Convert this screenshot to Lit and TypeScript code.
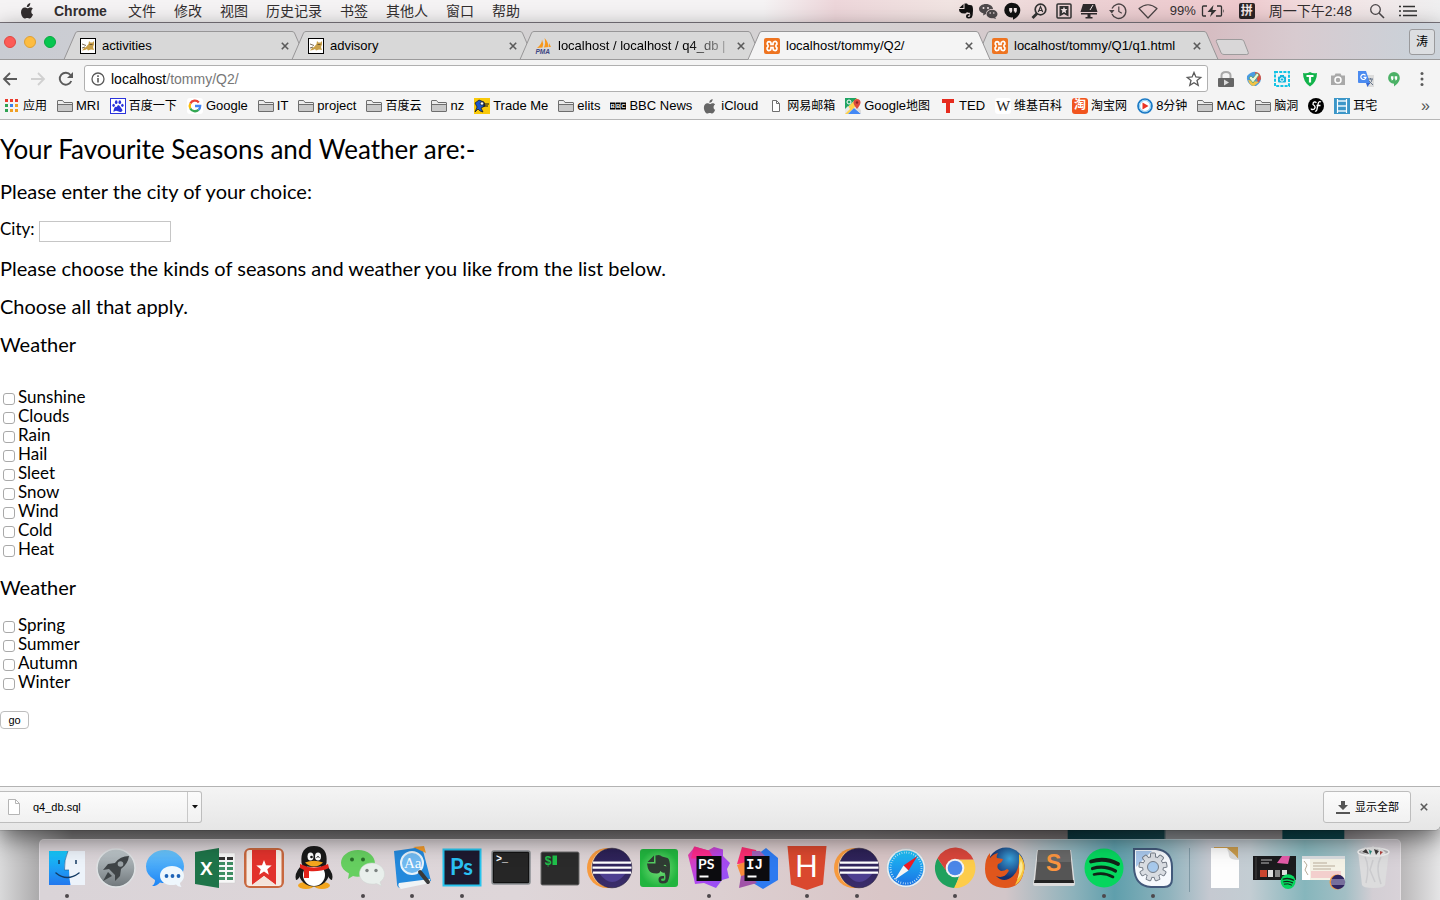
import { LitElement, html, svg, css, nothing, type SVGTemplateResult } from "lit";
import { customElement } from "lit/decorators.js";
import { classMap } from "lit/directives/class-map.js";

const icon = (w: number, h: number, body: SVGTemplateResult, box = `0 0 ${w} ${h}`) =>
  html`<svg width=${w} height=${h} viewBox=${box} fill="none" aria-hidden="true">${body}</svg>`;
const i16 = (body: SVGTemplateResult) => icon(16, 16, body);

/* ---------- shared glyphs ---------- */
const applePath = svg`<path d="M11.3 0c.1 1.100-.3 2.100-.9 2.900-.7.8-1.700 1.300-2.600 1.200-.1-1 .4-2.100.9-2.700C9.400.6 10.500.1 11.300 0zM14 11.600c-.4 1-1.600 3.900-3.200 3.900-1 0-1.400-.6-2.600-.6-1.200 0-1.600.6-2.500.6C3.900 15.600 2 12 2 9.300c0-2.900 1.800-4.700 3.700-4.700 1.100 0 2 .7 2.700.7.600 0 1.700-.8 3-.8 1 0 1.900.5 2.500 1.300-2.300 1.400-1.900 4.800.1 5.800z" fill="currentColor"/>`;
const closeX = icon(8, 8, svg`<path d="M.8.8l6.400 6.400M7.200.8L.8 7.200" stroke="#5a5a5a" stroke-width="1.600"/>`);
const folder = i16(svg`<path d="M.5 13V3q0-.5.5-.5h4.500L7 4.500h8q.5 0 .5.5v8q0 .5-.5.500H1Q.5 13.500.5 13z" fill="#c9c9c9" stroke="#6e6e6e"/><path d="M1 6.500h14" stroke="#6e6e6e"/><path d="M1 3h4.300L6.800 5H15v1H1z" fill="#ececec"/>`);
const tomcat = i16(svg`<rect x=".5" y=".5" width="15" height="15" fill="#fff" stroke="#000"/><path d="M2 12.500l2-2.500 2-1 2.500-3L9 3l1.500 1.500h2L14 3v3.500L13 9l1 3-3-.5-3 1-1-1.500-2 1z" fill="#c9a04a"/><path d="M2 6l4 1.500M2 10l3-1M9.500 6.500h3" stroke="#59452a" stroke-width=".8"/>`);
const xampp = i16(svg`<rect width="16" height="16" rx="2" fill="#ee7420"/><path d="M5 3.600a2 2 0 0 0-1 3.600v1.600a2 2 0 1 0 3 1.700V9.500h2v1a2 2 0 1 0 3-1.700V7.200a2 2 0 1 0-3-1.700v1H7v-1a2 2 0 0 0-2-1.900z" stroke="#fff" stroke-width="1.700"/>`);
const pma = i16(svg`<path d="M1 10Q6 6 6 1.500q2 4 .5 8zM8 9.500Q10 5 8.500 0q4 4 4 9zM13 9V5l2 4z" fill="#f7981d"/><text x="-.5" y="15.500" font-family="Liberation Sans" font-size="6.500" font-weight="700" font-style="italic" fill="#3c4482">PMA</text>`);

/* ---------- menu bar status ---------- */
const statusIcons = [
  icon(16, 18, svg`<path d="M5.500 2v4H1.300zM1 7h5.500V1.500h2.500l1 1.200 3.500.5q1.500.3 1.500 5.300 0 5-1.200 7-1 1-3.300 1-2.500 0-2.500-2.500 0-2 2.500-2h1v1.500q-1.800-.2-1.800.7 0 .8 1.300.8 1.300 0 1.300-2-.2-2-1-2.500-1.500.5-2.300-.5-.7 1.500-2.500 1.500-3.500 0-4.500-1.500Q1.300 10.500 1 7z" fill="#111"/>`),
  icon(20, 18, svg`<path d="M8 2c4 0 7 2.500 7 5h-1c-3.500 0-6 2.300-6 5l-3 1.500.5-2C3 10.500 1 9 1 7c0-2.700 3-5 7-5z" fill="#4e494b"/><ellipse cx="14" cy="12" rx="5.500" ry="4.300" fill="#4e494b"/><path d="M17 15l1 2-3-1z" fill="#4e494b"/><g fill="#f3e6e7"><circle cx="5.500" cy="6" r="1"/><circle cx="10" cy="6" r="1"/><circle cx="12.200" cy="11" r=".8"/><circle cx="15.800" cy="11" r=".8"/></g>`),
  icon(16, 18, svg`<path d="M8 1a7.300 7.300 0 0 1 7.300 7.300c0 5-4.500 8-7.300 9.500v-2.500A7.300 7.300 0 1 1 8 1z" fill="#111"/><path d="M4.200 6h3v3q-.3 2-2 2V9.500h-1zM8.800 6h3v3q-.3 2-2 2V9.500h-1z" fill="#f3e6e7"/>`),
  icon(16, 18, svg`<circle cx="9.500" cy="7.500" r="5.300" stroke="#333" stroke-width="1.700"/><path d="M6 11.500L1.500 16" stroke="#333" stroke-width="2.800"/><path d="M7.300 10l2.200-5.500L11.700 10M8 8.500h3" stroke="#333" stroke-width="1.200"/>`),
  icon(16, 18, svg`<rect x="1" y="2" width="14" height="14" rx="1" stroke="#333" stroke-width="1.500"/><path d="M3.500 4h9v10.500L8 12l-4.500 2.500z" fill="#333"/><path d="M8 4.700l1 2.300 2.500.2-1.900 1.600.6 2.500L8 9.900l-2.200 1.400.6-2.500-1.900-1.600L7 7z" fill="#f3e6e7"/>`),
  icon(20, 18, svg`<path d="M4 2h12l2.500 8h-17z" fill="#2e2a2c"/><path d="M2 11h16v1.500H2z" fill="#2e2a2c"/><path d="M8.500 12h3v3h2v1.500h-7V15h2z" fill="#2e2a2c"/><path d="M11 8l3-5" stroke="#f3e6e7"/>`),
  icon(18, 18, svg`<path d="M3 6.500A7.200 7.200 0 1 1 3 12" stroke="#4a4345" stroke-width="1.300"/><path d="M0 8h5.500L2.800 11.500z" fill="#4a4345"/><path d="M9.800 4.500v5l3 1.800" stroke="#4a4345" stroke-width="1.200"/>`),
  icon(20, 18, svg`<path d="M1 6.500Q10-1 19 6.500L10 16z" stroke="#4a4345" stroke-width="1.200" stroke-linejoin="round"/>`),
];
const battery = icon(24, 16, svg`<path d="M6 3H2.500Q1.500 3 1.500 4v8q0 1 1 1H5M16 3h3.500q1 0 1 1v8q0 1-1 1H15" stroke="#333" stroke-width="1.300"/><path d="M22 6q1.500 2 0 4z" fill="#333"/><path d="M12.500 2L6.500 9h4l-1.500 5L15.500 7h-4z" fill="#333"/>`);
const pinyin = html`<span class="ime">拼</span>`;
const spotlight = i16(svg`<circle cx="6.500" cy="6.500" r="4.800" stroke="#4a4648" stroke-width="1.300"/><path d="M10 10l5 5" stroke="#4a4648" stroke-width="1.600"/>`);
const listIcon = icon(18, 14, svg`<path d="M0 2.500h2M0 7h2M0 11.500h2" stroke="#333" stroke-width="1.600"/><path d="M4 2.500h12M4 7h14M4 11.500h14" stroke="#333" stroke-width="1.600"/>`);

/* ---------- toolbar ---------- */
const arrow = (color: string, flip: boolean) =>
  icon(16, 16, flip
    ? svg`<path d="M1 8h13M8 2l6 6-6 6" stroke=${color} stroke-width="1.800"/>`
    : svg`<path d="M15 8H2M8 2L2 8l6 6" stroke=${color} stroke-width="1.800"/>`);
const reload = i16(svg`<path d="M13.300 10A6 6 0 1 1 12.500 4" stroke="#5a5a5a" stroke-width="1.900"/><path d="M15 1v6H9z" fill="#5a5a5a"/>`);
const info = icon(14, 14, svg`<circle cx="7" cy="7" r="6" stroke="#5a5a5a" stroke-width="1.300"/><path d="M7 6v4.500M7 3.300v1.600" stroke="#5a5a5a" stroke-width="1.600"/>`);
const star = i16(svg`<path d="M8 1.500l1.900 4.500 4.800.4L11 9.500l1.200 4.800L8 11.700l-4.200 2.600L5 9.500 1.300 6.400 6.100 6z" stroke="#5a5a5a" stroke-width="1.300"/>`);
const extensions: [string, unknown][] = [
  ["Lock", i16(svg`<path d="M3.500 7V4.500q0-3.500 4.500-3.500t4.500 3.500V7" stroke="#aaa" stroke-width="2"/><rect y="7" width="16" height="9" rx="1" fill="#666"/><path d="M6 8.500l5 3-5 3z" fill="#ddd"/>`)],
  ["Shield", i16(svg`<path d="M1 5q5-5 9-4l5 5q1 5-5 9L6 15Q0 11 1 5z" fill="#4a9be0"/><path d="M9 1q6 0 6 7l-3 4z" fill="#dc503f"/><path d="M2 9q2 6 6 6l5-4z" fill="#f0c348"/><path d="M3 7l4 5 6-8-2-2-4 5-2-2z" fill="#e7f6d9" stroke="#53985b" stroke-width=".7"/>`)],
  ["Capture", i16(svg`<rect x="1" y="1" width="14" height="14" stroke="#14c4e5" stroke-width="2" stroke-dasharray="3 1.200"/><rect x="4" y="5.500" width="8" height="6" rx="1" fill="#14b5dc"/><path d="M6 4h4v2H6z" fill="#14b5dc"/><circle cx="8" cy="8.500" r="1.700" stroke="#fff"/>`)],
  ["Ad shield", i16(svg`<path d="M1 2q4 1 7-1 3 2 7 1 0 9-7 13.500Q1 11 1 2z" fill="#12b34b"/><path d="M4.500 5h7M8 5v6.500" stroke="#fff" stroke-width="2.200"/>`)],
  ["Camera", i16(svg`<path d="M1 4.500h3.500l1-2h5l1 2H15V14H1z" fill="#a9a9a9"/><circle cx="8" cy="9" r="3" stroke="#fff" stroke-width="1.500"/>`)],
  ["Translate", i16(svg`<path d="M7 4h9v12H9z" fill="#dcdcdc"/><path d="M0 0h8l4 12H1q-1 0-1-1z" fill="#4b8bf0"/><path d="M7.500 4.300A2.600 2.600 0 1 0 8 6.300H5.500" stroke="#fff" stroke-width="1.200"/><path d="M10 8h5M12.500 7v1.500M11 13q3-2 3.200-5M11 10l4 4" stroke="#66758a"/><path d="M8 12h4l-2.500 4z" fill="#3367d6"/>`)],
  ["Hangouts", i16(svg`<path d="M8 1a5.800 5.800 0 0 1 5.800 6C13.800 11 10 14 8 15.500v-2.700A5.900 5.900 0 1 1 8 1z" fill="#4bb166"/><path d="M4.900 5.300h2.500v2.400q-.2 1.800-1.900 1.800V7.800h-.6zM8.700 5.300h2.500v2.400q-.2 1.800-1.900 1.800V7.800h-.6z" fill="#fff"/>`)],
  ["Menu", i16(svg`<g fill="#5a5a5a"><circle cx="8" cy="2.500" r="1.500"/><circle cx="8" cy="8" r="1.500"/><circle cx="8" cy="13.500" r="1.500"/></g>`)],
];

/* ---------- bookmarks ---------- */
const bookmarks: [unknown, string, string][] = [
  [i16(svg`<g transform="translate(1 1)"><path d="M0 0h3v3H0zM5 0h3v3H5zM10 0h3v3h-3z" fill="#e93b2d"/><path d="M0 5h3v3H0z" fill="#2fa352"/><path d="M5 5h3v3H5z" fill="#3a80ea"/><path d="M10 5h3v3h-3zM5 10h3v3H5zM10 10h3v3h-3z" fill="#f0a024"/><path d="M0 10h3v3H0z" fill="#2fa352"/></g>`), "", "应用"],
  [folder, "MRI", ""],
  [i16(svg`<rect x=".5" y=".5" width="15" height="15" fill="#fff" stroke="#2a33db"/><g fill="#2a33db"><ellipse cx="6.200" cy="4.200" rx="1.300" ry="1.900"/><ellipse cx="9.800" cy="4.200" rx="1.300" ry="1.900"/><ellipse cx="3.600" cy="7.300" rx="1.200" ry="1.600"/><ellipse cx="12.400" cy="7.300" rx="1.200" ry="1.600"/><path d="M8 7q1.300 0 2.300 1.800t1.900 2.700-.5 2-3.700-.2-3.700.2-.5-2 1.900-2.700T8 7z"/></g>`), "", "百度一下"],
  [i16(svg`<rect width="16" height="16" rx="3" fill="#fff"/><g stroke-width="2.300"><path d="M3.300 5.500A5.200 5.200 0 0 1 11.800 4.400" stroke="#ea4335"/><path d="M3.300 10.500a5.200 5.200 0 0 1 0-5" stroke="#fbbc05"/><path d="M11.500 11.800a5.200 5.200 0 0 1-8.200-1.300" stroke="#34a853"/><path d="M8 8h5.200q0 2.500-1.700 3.800" stroke="#4285f4"/></g>`), "Google", ""],
  [folder, "IT", ""],
  [folder, "project", ""],
  [folder, "", "百度云"],
  [folder, "nz", ""],
  [i16(svg`<rect width="16" height="16" fill="#f9c909"/><path d="M1 14l2-5-2-4 4-3 5 2 1 4-4 2 2 4-3-1-2-2z" fill="#1d56c9" stroke="#111" stroke-width=".7"/><path d="M9 6l6 0M9 8h5" stroke="#111" stroke-width="1.200"/><circle cx="8" cy="5.500" r="1.700" fill="#fff" stroke="#111" stroke-width=".7"/>`), "Trade Me", ""],
  [folder, "elits", ""],
  [i16(svg`<path d="M0 4.500h5v7H0zM5.500 4.500h5v7h-5zM11 4.500h5v7h-5z" fill="#000"/><g font-family="Liberation Sans" font-size="6" font-weight="700" fill="#fff"><text x=".5" y="10.200">B</text><text x="6" y="10.200">B</text><text x="11.300" y="10.200">C</text></g>`), "BBC News", ""],
  [icon(16, 16, svg`<g color="#666">${applePath}</g>`, "0 -1 17 17"), "iCloud", ""],
  [i16(svg`<path d="M4.500 2.500h4l3 3v8h-7z" fill="#fff" stroke="#6e6e6e"/><path d="M8.500 2.500v3h3" stroke="#6e6e6e"/>`), "", "网易邮箱"],
  [i16(svg`<path d="M0 0h12L0 12z" fill="#1fa463"/><path d="M0 12L12 0l1 6-10 10H0z" fill="#ffd24d"/><path d="M0 11l3-3 2 3-5 5z" fill="#e8e8e8"/><path d="M3 16l6-6 7 6z" fill="#4489f5"/><path d="M9.500 10l2.500-2 4 4v4z" fill="#ddd"/><path d="M12 1q3.500 0 3.500 3.500 0 2-3.500 6.500-3.500-4.500-3.500-6.500Q8.500 1 12 1z" fill="#dd4b3e"/><circle cx="12" cy="4.500" r="1.200" fill="#822"/><circle cx="4" cy="4" r="2" stroke="#fff"/>`), "Google", "地图"],
  [i16(svg`<path d="M2 1h12v4h-4v10H6V5H2z" fill="#e62b1e"/>`), "TED", ""],
  [i16(svg`<rect width="16" height="16" rx="3" fill="#fff"/><text x="1" y="13" font-family="Liberation Serif" font-size="15" fill="#222">W</text>`), "", "维基百科"],
  [html`<span class="taobao">淘</span>`, "", "淘宝网"],
  [i16(svg`<circle cx="8" cy="8" r="7" fill="#fff" stroke="#1b7ac5" stroke-width="1.700"/><circle cx="8" cy="8" r="5.500" stroke="#8ccaf0" stroke-width="1.200"/><path d="M5.500 4.500l6 3.500-6 3.500z" fill="#ea3323"/>`), "8", "分钟"],
  [folder, "MAC", ""],
  [folder, "", "脑洞"],
  [i16(svg`<circle cx="8" cy="8" r="8" fill="#000"/><path d="M8.300 5q-.6-1.300-2-1T5 6.500Q7.500 8 7 9.800T4 11.500q-1-.2-.5-1M13 4q-2-1.200-2.800 1.500L8.800 12q-.5 1.500-1.800 1M8.500 7.500h4" stroke="#fff" stroke-width="1.300"/>`), "", ""],
  [i16(svg`<rect width="16" height="16" fill="#3b96c8"/><path d="M3.500 1v14M12.500 1v14" stroke="#fff" stroke-width="1.200"/><path d="M4 3h8M4 8h8M4 13h8" stroke="#e9f5fb" stroke-width="1.500"/>`), "", "耳宅"],
];

/* ---------- dock ---------- */
const dock = (body: SVGTemplateResult) => icon(44, 44, body, "-2 -2 44 44");
const eclipse = (id: string) => dock(svg`
  <defs><linearGradient id=${id} x1="0" y1="0" x2="0" y2="1"><stop stop-color="#2b2054"/><stop offset="1" stop-color="#3a2d6b"/></linearGradient></defs>
  <circle cx="17" cy="20" r="20" fill="#f79a3e"/><circle cx="20.500" cy="20" r="19.500" fill="#f7d9bb"/><circle cx="22" cy="20" r="19.800" fill=${`url(#${id})`} stroke="#1e1a35" stroke-width=".6"/>
  <path d="M9 25q13 18 27 0z" fill="#4d3f91"/>
  <path d="M3 14.700h38M2.500 19.700h39M3 24.700h38" stroke="#fff" stroke-width="2.300"/>`);
const spotifyMark = svg`<circle cx="20" cy="20" r="19.500" fill="#06d65e"/><path d="M7 13.500q14-4.500 27 2.500" stroke="#102317" stroke-width="3.800" stroke-linecap="round"/><path d="M8.500 20.500q12-3.500 23 2.500" stroke="#102317" stroke-width="3.200" stroke-linecap="round"/><path d="M10 26.500q10-2.700 19 2.500" stroke="#102317" stroke-width="2.600" stroke-linecap="round"/>`;
const gearTeeth = [0, 40, 80, 120, 160, 200, 240, 280, 320];

const dockApps: { name: string; on?: boolean; art: unknown }[] = [
  { name: "Finder", on: true, art: dock(svg`
    <defs><linearGradient id="fa" x1="0" y1="0" x2="0" y2="1"><stop stop-color="#16c9fa"/><stop offset="1" stop-color="#2277ee"/></linearGradient></defs>
    <rect x="2" y="3" width="36" height="34" fill="#edf3fa"/><path d="M2 3h19q-4 9-3.500 19H22q0 8 1.500 15H2z" fill="url(#fa)"/>
    <path d="M12 12v4M29 12v4" stroke="#143b63" stroke-width="1.500"/><path d="M9 25q11 9 23 0" stroke="#143b63" stroke-width="1.500" stroke-linecap="round"/><path d="M21 3q-4 9-3.500 19H22" stroke="#1d5990" stroke-width=".6"/>`) },
  { name: "Launchpad", art: dock(svg`
    <defs><linearGradient id="la" x1="0" y1="0" x2="0" y2="1"><stop stop-color="#c3ccd0"/><stop offset="1" stop-color="#70777b"/></linearGradient></defs>
    <circle cx="20" cy="20" r="19" fill="url(#la)" stroke="#dfe2e4" stroke-width="1.500"/>
    <path d="M33 8q-9 0-14 7l-7 1-5 6 6-1 6 6 0 6 5-5 1-7q7-5 8-13z" fill="#3f4447"/><circle cx="24.500" cy="16" r="2.800" fill="#9aa2a6"/><path d="M12 24l-5 9 9-5z" fill="#3f4447"/>`) },
  { name: "Messages", art: dock(svg`
    <defs><linearGradient id="ma" x1="0" y1="0" x2="0" y2="1"><stop stop-color="#6bc6fb"/><stop offset="1" stop-color="#1b84f6"/></linearGradient></defs>
    <path d="M20 2c11 0 19 7.500 19 16.500S31 35 20 35q-3 0-5-.6Q12 38 7 38q3-2 3-6Q1 27 1 18.500C1 9.500 9 2 20 2z" fill="url(#ma)"/>
    <path d="M27 18c7 0 12 4.300 12 9.700 0 3-1.600 5.400-4 7.200q0 2.500 1.500 4-4 0-5.500-2.400-2 .6-4 .6c-7 0-12-4-12-9.400S20 18 27 18z" fill="#eef7fd"/><g fill="#1d63b8"><circle cx="21.500" cy="28" r="1.900"/><circle cx="27.500" cy="28" r="1.900"/><circle cx="33.500" cy="28" r="1.900"/></g>`) },
  { name: "Excel", art: dock(svg`
    <path d="M20 5h20v30H20z" fill="#f7f7f7" stroke="#cfcfcf" stroke-width=".5"/><g fill="#3f8e63"><path d="M24 14h6v3h-6zM32 14h6v3h-6zM24 19h6v3h-6zM32 19h6v3h-6zM24 24h6v3h-6zM32 24h6v3h-6zM24 29h6v3h-6zM32 29h6v3h-6z"/></g><path d="M24 9h6v3h-6zM32 9h6v3h-6z" fill="#333"/>
    <path d="M0 4l24-4v40L0 36z" fill="#1e7449"/><text x="5" y="27" font-family="Liberation Sans" font-size="19" font-weight="700" fill="#fff">X</text>`) },
  { name: "Wunderlist", art: dock(svg`
    <rect x="0" y="0" width="40" height="40" rx="6" fill="#c8683f"/><rect x="2.500" y="2" width="35" height="36" rx="3" fill="#f6ebe4"/><path d="M8 2h24v35l-12-9-12 9z" fill="#e2322c"/><path d="M8 37l12-9 12 9z" fill="#f4e3da"/>
    <path d="M20 12l2 5.300 5.700.3-4.400 3.600 1.500 5.500-4.800-3.100-4.800 3.100 1.500-5.500-4.400-3.600 5.700-.3z" fill="#fff"/>`) },
  { name: "QQ", art: dock(svg`
    <ellipse cx="12" cy="37.500" rx="8" ry="3.500" fill="#f3a51d"/><ellipse cx="28" cy="37.500" rx="8" ry="3.500" fill="#f3a51d"/>
    <path d="M6 19Q0 26 2 32q2 0 4-4M34 19q6 7 4 13-2 0-4-4" fill="#191919"/><ellipse cx="20" cy="25" rx="15" ry="13.500" fill="#191919"/><ellipse cx="20" cy="27" rx="11" ry="11" fill="#fff"/>
    <path d="M7.500 15Q6-2 20-2t12.500 17q0 4-12.500 4T7.500 15z" fill="#191919"/><ellipse cx="16.500" cy="8.500" rx="3" ry="4" fill="#fff"/><ellipse cx="24" cy="8.500" rx="3" ry="4" fill="#fff"/><circle cx="17.500" cy="9" r="1.300" fill="#111"/><path d="M22.500 9.500q1.500-2 3 0" stroke="#111"/>
    <path d="M6 16q14 7 28 0l1 4q-9 4-20 3v7h-5v-8l-4-2z" fill="#e2231a"/><path d="M11 14.500q9-3.500 18 0-4 4-9 4t-9-4z" fill="#f5a71e"/>`) },
  { name: "WeChat", on: true, art: dock(svg`
    <path d="M15 2c10 0 17 6 17 13.500l-2 .5q-13 1-13 12.500-4 .5-7-.5L5 31l1-5.500Q-2 21-2 15C-2 8 5 2 15 2z" fill="#66cf60"/><path d="M29 15c7 0 12.500 5 12.500 11 0 3.500-1.700 6-4.500 8l1.500 4-5-2.500q-2 .6-4.500.6c-7 0-12.500-4.500-12.500-10.500S22 15 29 15z" fill="#e9efec" stroke="#cfd6d2" stroke-width=".5"/><g fill="#286f29"><circle cx="9" cy="11.500" r="2"/><circle cx="20" cy="11.500" r="2"/></g><g fill="#7b8280"><circle cx="24" cy="22.500" r="1.700"/><circle cx="33" cy="22.500" r="1.700"/></g>`) },
  { name: "Dictionary", on: true, art: dock(svg`
    <path d="M2 3l28-4 9 34-31 7q-3-1-3-4z" fill="#2389dc"/><path d="M7 35l31-4 0 4-29 6q-4-3-2-6z" fill="#f0f3f5"/><path d="M21-1l11-1 2 7z" fill="#f29b2c"/><circle cx="20" cy="15" r="11" fill="#71baf1" stroke="#e7f3fb" stroke-width="2"/><text x="12" y="20" font-family="Liberation Serif" font-size="15" fill="#fff">Aa</text><path d="M28 24l8 10" stroke="#3a3a3a" stroke-width="4" stroke-linecap="round"/>`) },
  { name: "Photoshop", on: true, art: dock(svg`
    <rect x="1.500" y="1.500" width="37" height="36" fill="#1d1a2f" stroke="#26c4ee" stroke-width="2"/><text x="8" y="27" font-family="Lato" font-size="22" font-weight="700" fill="#2bc0f2">Ps</text>`) },
  { name: "Terminal", art: dock(svg`
    <rect x="1" y="3" width="38" height="33" rx="2" fill="#262626" stroke="#8b8f92" stroke-width="1.500"/><rect x="2.500" y="4.500" width="35" height="30" rx="1" stroke="#111"/><text x="5" y="14" font-family="Liberation Mono" font-size="10" font-weight="700" fill="#fff">&gt;_</text>`) },
  { name: "iTerm", art: dock(svg`
    <rect x="1" y="4" width="38" height="33" rx="1.500" fill="#2b2b2b" stroke="#6b6b6b"/><text x="4.500" y="16.500" font-family="Liberation Mono" font-size="12" font-weight="700" fill="#1fc04a">$</text><path d="M12.500 7.500h4.500V17h-4.500z" fill="#1fc04a"/>`) },
  { name: "Eclipse", art: eclipse("ea") },
  { name: "Evernote", art: dock(svg`
    <defs><radialGradient id="ev"><stop stop-color="#7be07c"/><stop offset="1" stop-color="#22b53f"/></radialGradient></defs>
    <rect x="1" y="1" width="38" height="38" rx="3" fill="url(#ev)"/><path d="M15 7.500V14H8.500zM8 15.500h8.500V7.500q4.500-1.500 6.500 1l5.500 1.500q2.500 1 2.500 9.500 0 10-2.500 14.500-1.500 1.500-5 1.500-4 0-4-4 0-3.500 4-3.500H25v2.500q-3-.3-3 1.200 0 1.300 2 1.300 2.500 0 2.500-3 0-4-1-5.500-2.500.7-4-1.500-1 2.800-4 2.500-6 0-7.500-3Q8.500 20 8 15.500z" fill="#2f3b33"/><path d="M24.500 17.500q2-2 3 1z" fill="#6fdb70"/>`) },
  { name: "PhpStorm", on: true, art: dock(svg`
    <defs><linearGradient id="pa" x1="0" y1="0" x2="1" y2="1"><stop stop-color="#f23a9b"/><stop offset=".5" stop-color="#b046ee"/><stop offset="1" stop-color="#8a55f8"/></linearGradient></defs>
    <path d="M-1 7L6-1.500l13 4 6-3.500 9 2.500v6.500l7 7-3 6 2 9-7 2-6 8-12-5-9 1-1-5z" fill="url(#pa)"/><path d="M5-1.500l15 4 5 8H2z" fill="#fb2a8c"/>
    <rect x="7.500" y="8" width="25" height="25" fill="#0c0c0f"/><text x="9" y="20.500" font-family="Lato" font-size="14" font-weight="700" fill="#fff">PS</text><path d="M10.500 28.500h9" stroke="#fff" stroke-width="2"/>`) },
  { name: "IntelliJ IDEA", art: dock(svg`
    <path d="M4-1l14 3 5 12L-1 16z" fill="#fb2e72"/><path d="M-1 17l8-3 4 14-8 0z" fill="#f98b3b"/><path d="M20 6l8-6 12 10v22l-15 9-15-9z" fill="#2d7af0"/><path d="M3 28l8-2 8 9-18 5z" fill="#a153a8"/><path d="M14 3h8l6 6H14z" fill="#a163b8"/><rect x="6.500" y="8" width="25" height="25" fill="#0c0c0f"/><text x="8" y="20.500" font-family="Liberation Mono" font-size="14" font-weight="700" fill="#fff">IJ</text><path d="M9.500 28.500h9" stroke="#fff" stroke-width="2"/>`) },
  { name: "HBuilder", on: true, art: dock(svg`
    <path d="M.5-2h39L36 36.500 20 42 4 36.500z" fill="#da482e"/><text x="8" y="29" font-family="Lato" font-size="30" fill="#fff">H</text>`) },
  { name: "Eclipse EE", on: true, art: eclipse("eb") },
  { name: "Safari", art: dock(svg`
    <defs><linearGradient id="sa" x1="0" y1="0" x2="0" y2="1"><stop stop-color="#1ec1f6"/><stop offset="1" stop-color="#1a72e4"/></linearGradient></defs>
    <circle cx="20" cy="20" r="19.500" fill="#eceef0" stroke="#b9bdc2" stroke-width=".5"/><circle cx="20" cy="20" r="17.500" fill="url(#sa)"/><circle cx="20" cy="20" r="15.500" stroke="#d4effb" stroke-width="2" stroke-dasharray=".7 1.730"/>
    <path d="M31.500 8L17.500 17.500l5 5z" fill="#ed1c24"/><path d="M8.500 32l9-14.500 5 5z" fill="#f4f4f4"/>`) },
  { name: "Chrome", on: true, art: dock(svg`
    <path d="M20 40A20 20 0 0 1 2.500 10.200L13 25l11 3z" fill="#1fa15d"/><path d="M19 40A20 20 0 0 0 38.500 11.500H20l8.500 9z" fill="#fdcc4a"/><path d="M2.500 10.200A20 20 0 0 1 38.500 11.500H20L12 24z" fill="#d9463b"/><circle cx="20" cy="20" r="9.300" fill="#f3f3f3"/><circle cx="20" cy="20" r="7.300" fill="#4a87e8"/>`) },
  { name: "Firefox", art: dock(svg`
    <defs><radialGradient id="ff" cx=".6" cy=".3"><stop stop-color="#3aa3dc"/><stop offset="1" stop-color="#14306f"/></radialGradient></defs>
    <circle cx="21" cy="18" r="18.500" fill="url(#ff)"/><path d="M34 6q7 8 5 17Q36 40 20 40 0 39 0 21 0 10 5 5v5q3-4 8-5-2 3-1 5l6 1q-1 4-5 5-2 5 3 7 4 0 6-2 3 1 1 3-4 7-12 4 8 8 17 0 7-6 6-22z" fill="#e0561c"/><path d="M34 6q7 8 5 17-2 10-9 14 6-12 4-20z" fill="#f8c73b"/><path d="M36 12q5 10-4 20 3-8 2-14z" fill="#fbe99a"/>`) },
  { name: "Sublime Text", art: dock(svg`
    <path d="M3 2h34l4 34q0 2-2 2H1q-2 0-2-2z" fill="#dcdcdc"/><path d="M.5 32h39l.5 3H0z" fill="#222"/><path d="M4 2h32l3 30H1z" fill="#555"/><path d="M4 2h32l1 12H3z" fill="#686868"/><text x="12" y="23" font-family="Liberation Sans" font-size="23" font-weight="700" fill="#fb9540">S</text>`) },
  { name: "Spotify", on: true, art: dock(spotifyMark) },
  { name: "System tool", on: true, art: dock(svg`
    <path d="M1 1h22q16 2 16 18v12q0 8-8 8H18Q2 38 1 20z" fill="#f6f9fd" stroke="#42597b" stroke-width="2"/><path d="M3 3h16L3 19z" fill="#a9c8ec"/>
    <g stroke="#757d88" stroke-width="1" fill="#d9dde2">${gearTeeth.map((a) => svg`<rect x="17.500" y="5" width="5" height="6" rx="1" transform=${`rotate(${a} 20 19)`}/>`)}<circle cx="20" cy="19" r="10.500"/></g><g fill="#d9dde2">${gearTeeth.map((a) => svg`<rect x="18" y="7" width="4" height="4" transform=${`rotate(${a} 20 19)`}/>`)}</g><circle cx="20" cy="19" r="5.500" fill="#a7c9ec" stroke="#757d88"/>`) },
];
const dockFiles: { name: string; art: unknown }[] = [
  { name: "Documents", art: dock(svg`<path d="M9-1h24v14H9z" fill="#c99b4c"/><path d="M6 0h16l12 12v28H6z" fill="#fdfdfd"/><path d="M20 0q4 2 4 8 1 4 10 4L30 7q-5-5-10-7z" fill="#dcdcdc"/>`) },
  { name: "Spotify window", art: dock(svg`<rect x="-2" y="8" width="43" height="24" fill="#1b1b1d"/><path d="M1 9v22" stroke="#444"/><path d="M22 15l5-7h8l-2 8z" fill="#e45ba8"/><path d="M6 12h11M6 15h8" stroke="#bbb"/><path d="M5 22h7v7H5z" fill="#c9452f"/><path d="M13 22h5v7h-5z" fill="#ddd"/><path d="M20 22h5v7h-5z" fill="#888"/><path d="M27 22h5v5h-5z" fill="#ddd"/><g transform="translate(25.500 26) scale(.38)">${spotifyMark}</g>`) },
  { name: "Eclipse window", art: dock(svg`<rect x="-2" y="8" width="43" height="24" fill="#f4f2e6"/><path d="M-2 8h43v3H-2z" fill="#d9dde0"/><path d="M-2 11H6v21h-8z" fill="#fff"/><path d="M7 23h30v7H7z" fill="#f3cfcd"/><path d="M0 13l3 4-2 5 3 5M9 15h14M9 18h22M9 21h18" stroke="#b9ac9a"/><circle cx="33" cy="34" r="7.500" fill="#f79a3e"/><circle cx="34" cy="34" r="7.200" fill="#2f2560"/><path d="M27 32h14M27 34h14M27 36h14" stroke="#cfcbe6" stroke-width=".9"/>`) },
  { name: "Trash", art: dock(svg`<path d="M5 3h31l-4 34q-1 3-11.500 3T9 37z" fill="#dcdcdd"/><path d="M12 9q5 9 1 26M28 9q-6 10 0 27M20 12l-3 10 5 12" stroke="#cbcbce" stroke-width="1.500"/><ellipse cx="20.500" cy="4" rx="15.500" ry="4" fill="#b4b4b6" stroke="#f4f4f4" stroke-width="1.500"/><path d="M8 4l4-5 4 3 4-4 4 4 4-2 5 5-5 3-8 1z" fill="#e9e9e9"/><path d="M9 4l4-3 3 5zM21 1l5 2-3 4z" fill="#3d3a3a"/><path d="M16 2l3 1-2 4z" fill="#2f8e82"/><path d="M27 3l3 1-3 3z" fill="#b2433f"/>`) },
];

const tabs = [
  { art: tomcat, title: "activities", active: false },
  { art: tomcat, title: "advisory", active: false },
  { art: pma, title: "localhost / localhost / q4_db |", active: false, fade: true },
  { art: xampp, title: "localhost/tommy/Q2/", active: true },
  { art: xampp, title: "localhost/tommy/Q1/q1.html", active: false },
];
const menus = ["文件", "修改", "视图", "历史记录", "书签", "其他人", "窗口", "帮助"];
const weather = ["Sunshine", "Clouds", "Rain", "Hail", "Sleet", "Snow", "Wind", "Cold", "Heat"];
const seasons = ["Spring", "Summer", "Autumn", "Winter"];

@customElement("app-root")
export class AppRoot extends LitElement {
  static styles = css`
    :host { display: flex; flex-direction: column; min-height: 100vh; box-sizing: border-box; color: #000;
      font: 13px/16px "Liberation Sans", "Noto Sans CJK SC", sans-serif; background: #fff; }
    * { box-sizing: border-box; }
    svg { display: block; flex: none; overflow: visible; }
    button { font: inherit; color: inherit; background: none; border: 0; padding: 0; margin: 0; }
    a { color: inherit; text-decoration: none; }

    .menubar { display: flex; align-items: center; height: 23px; padding: 0 23px 0 19px; color: #332f30; font-size: 14px; border-bottom: 1px solid #88828a; white-space: nowrap;
      background: linear-gradient(90deg, #f5f3f4 0, #f5f3f4 53%, #edd6da 58%, #f1e4e2 66%, #ecd0d3 76%, #eec9cd 86%, #f2e4e5 93%, #efeff0 100%); }
    .menus { display: flex; align-items: center; gap: 18px; flex: 1; }
    .app-name { padding: 0 3px 0 1px; font-weight: 700; }
    .status { display: flex; align-items: center; gap: 14px; }
    .status-icons { display: grid; grid-template-columns: 18px 26px 24px 28px 22px 28px 30px 30px; justify-items: center; align-items: center; }
    .power { display: flex; align-items: center; gap: 5px; margin-left: -7px; font-size: 13px; }
    .ime { width: 16px; height: 16px; border-radius: 2px; background: #2c2426; color: #f5e6e7; font-size: 12px; line-height: 16px; text-align: center; font-weight: 700; }
    .search { margin-left: 3px; }

    .window { display: flex; flex-direction: column; flex: 1; background: #fff; border-radius: 0 0 5px 0; box-shadow: 0 8px 24px rgba(0, 0, 0, .55), 0 0 1px #000; z-index: 1; overflow: hidden; }
    .strip { display: flex; align-items: flex-end; height: 37px; padding-left: 4px; border-bottom: 1px solid #9b9a9b;
      background: linear-gradient(90deg, #c9ccd3 0, #d2d0d2 20%, #d5d2d3 60%, #d6bdc2 84%, #d8cbd0 90%, #cbd1d8 98%, #cdd3da 100%); }
    .lights { display: flex; gap: 8px; align-self: center; margin-right: 8px; padding-top: 1px; }
    .light { width: 12px; height: 12px; border-radius: 50%; background: #fc5b57; border: 1px solid #e2463f; }
    .light.min { background: #fdbc40; border-color: #dfa032; }
    .light.max { background: #06c650; border-color: #07a93f; }
    .tabs { display: flex; flex: 1; min-width: 0; align-items: flex-end; }
    .tab { display: grid; flex: 0 1 242px; min-width: 0; height: 29px; margin: 0 -14px -1px 0; }
    .tab.active { z-index: 1; }
    .tab-shape, .tab-body { grid-area: 1 / 1; min-width: 0; }
    .tab-shape { width: 100%; height: 29px; }
    .tab-body { display: flex; align-items: center; gap: 6px; padding: 0 17px 0 16px; }
    .tab-title { flex: 1; min-width: 0; overflow: hidden; white-space: nowrap; }
    .fade { mask-image: linear-gradient(90deg, #000 75%, transparent 105%); }
    .new-tab { margin: 0 0 4px 11px; }
    .profile { width: 26px; height: 26px; margin: 0 5px 4px 0; border: 1px solid #9a9a9c; border-radius: 3px; font-size: 12px; background: #dcdee1; }

    .toolbar { display: flex; align-items: center; gap: 12px; padding: 5px 10px 0 2px; background: #f4f4f4; }
    .omnibox { display: flex; align-items: center; flex: 1; gap: 6px; height: 27px; margin-left: -2px; padding: 0 5px 0 6px; background: #fff; border: 1px solid #b0b0b0; border-radius: 3px; font-size: 14px; }
    .url { flex: 1; }
    .path { color: #777; }
    .extensions { display: flex; gap: 12px; margin-left: -2px; }

    .bookmarks { display: flex; align-items: center; height: 28px; padding: 0 10px 0 4px; background: #f4f4f4; border-bottom: 1px solid #b6b6b6; gap: 10px; white-space: nowrap; }
    .bookmark { display: flex; align-items: center; gap: 3px; }
    .cjk { font-size: 12px; }
    .taobao { width: 16px; height: 16px; border-radius: 3px; background: #f1551f; color: #fff; font-size: 12px; line-height: 15px; font-weight: 700; text-align: center; }
    .more { margin-left: auto; font-size: 16px; color: #555; }

    .page { flex: 1; display: flex; flex-direction: column; align-items: flex-start; gap: 18px; padding: 16px 0 0; font-family: Lato, sans-serif; font-size: 17px; background: #fff; }
    h1, h2, p { margin: 0; font-weight: 400; }
    h1 { font-size: 26px; line-height: 27px; }
    h2, .lead { font-size: 20px; line-height: 20px; }
    .city { display: flex; align-items: flex-start; gap: 4px; height: 21px; line-height: 20px; }
    .city-input { width: 132px; height: 21px; margin: 2px 0 0; border: 1px solid #c6c6c6; padding: 0 2px; background: #fff; }
    .choices { display: flex; flex-direction: column; margin: 0; padding: 0 0 1px; border: 0; list-style: none; }
    .choices.spaced { margin-top: 15px; }
    .choice { display: flex; align-items: center; gap: 3px; height: 19px; padding-left: 3px; line-height: 19px; }
    .box { appearance: none; width: 12px; height: 12px; margin: 5px 0 0; border: 1px solid #a9a9a9; border-radius: 3px; background: #fff; }
    .go { width: 29px; height: 18px; margin-top: 1px; border: 1px solid #bdbdbd; border-radius: 4px; background: #fff; font: 11px/14px "Liberation Sans", sans-serif; }

    .shelf { display: flex; align-items: center; height: 44px; padding: 0 12px 4px 0; border-top: 1px solid #b3b3b3; background: linear-gradient(#f4f4f4, #e6e6e6); font-size: 11px; }
    .download { display: flex; align-items: stretch; width: 202px; height: 32px; border: 1px solid #bdbdbd; border-left: 0; border-radius: 0 3px 3px 0; background: linear-gradient(#fbfbfb, #f1f1f1); }
    .file { display: flex; flex: 1; align-items: center; gap: 12px; padding-left: 7px; }
    .caret { display: flex; align-items: center; justify-content: center; width: 14px; border-left: 1px solid #c8c8c8; }
    .show-all { display: flex; align-items: center; gap: 4px; height: 32px; margin: 0 9px 0 auto; padding: 0 11px; border: 1px solid #bdbdbd; border-radius: 3px; background: linear-gradient(#fbfbfb, #f1f1f1); }
    .shelf-close { padding: 4px 0; }

    .desktop { display: flex; padding: 9px 39px 0;
      background: linear-gradient(90deg, #d9d9da 0, #858384 5%, #7c7a7b 30%, #858081 60%, #756f70 74.1%, #0d3a42 74.200%, #15444c 80.800%, #8b8f93 81%, #8b8789 89%, #0b4148 89.100%, #0e464d 93.300%, #8f8a8d 93.400%, #b5b3b4 97%, #e5e5e6 100%); }
    .dock { display: flex; flex: 1; min-width: 0; height: 61px; padding: 0 2px; border-radius: 5px 5px 0 0; border: 1px solid rgba(255, 255, 255, .3); border-bottom: 0;
      background: linear-gradient(90deg, #dad4d8 0, #ded6d9 35%, #dccfd1 50%, #d9c6c7 62%, #d2c6c9 71%, #8db2bb 76%, #5f9fac 79%, #8fb3bd 83%, #c5c9d1 86%, #c3cdd3 89%, #86b6bc 93%, #a3bfc5 96%, #d3ced4 98%, #d8d2d8 100%); }
    .slot { display: flex; flex: 1; min-width: 0; flex-direction: column; align-items: center; padding-top: 6px; gap: 4px; }
    .running { width: 4px; height: 4px; border-radius: 50%; background: #4d484c; }
    .divider { width: 1px; margin: 8px 11px; background: #7f99a5; }
  `;

  private tabShape(active: boolean) {
    const fill = active ? "#f4f4f4" : "#d8d8d8";
    return html`<svg class="tab-shape" viewBox="0 0 242 29" preserveAspectRatio="none" fill="none" aria-hidden="true">
      <path d="M0 28.500L11.500 2Q12.200.5 14 .5h214q1.800 0 2.500 1.500L242 28.500z" fill=${fill}/>
      <path d="M0 28.500L11.500 2Q12.200.5 14 .5h214q1.800 0 2.500 1.500L242 28.500" stroke="#979697"/>
      ${active ? nothing : svg`<path d="M0 28.500h242" stroke="#9b9a9b"/>`}
    </svg>`;
  }

  private choices(group: string, names: string[], spaced: boolean) {
    return html`<ul class=${classMap({ choices: true, spaced })}>
      ${names.map((n) => html`<li class="choice">
        <input class="box" type="checkbox" id=${`${group}-${n}`} name=${group} value=${n} /><label for=${`${group}-${n}`}>${n}</label>
      </li>`)}
    </ul>`;
  }

  render() {
    return html`
      <header class="menubar">
        <nav class="menus">
          ${icon(16, 16, applePath, "0 0 16 16")}
          <span class="app-name">Chrome</span>
          ${menus.map((m) => html`<span>${m}</span>`)}
        </nav>
        <div class="status">
          <div class="status-icons">${statusIcons}</div>
          <span class="power">99% ${battery}</span>
          ${pinyin}
          <span>周一下午2:48</span>
          <span class="search">${spotlight}</span>
          ${listIcon}
        </div>
      </header>

      <div class="window">
        <div class="strip">
          <div class="lights"><span class="light"></span><span class="light min"></span><span class="light max"></span></div>
          <div class="tabs">
            ${tabs.map((t) => html`<div class=${classMap({ tab: true, active: t.active })}>
              ${this.tabShape(t.active)}
              <div class="tab-body">${t.art}<span class=${classMap({ "tab-title": true, fade: !!t.fade })}>${t.title}</span>
                <button aria-label="Close tab">${closeX}</button></div>
            </div>`)}
            <button class="new-tab" aria-label="New tab">${icon(34, 16, svg`<path d="M3 .5h23q2 0 2.800 1.500l4.500 11.500q.5 2-1.500 2H9q-2 0-2.800-1.500L1.300 2.500Q.8.5 3 .5z" fill="#d9d7d8" stroke="#9d9b9c"/>`)}</button>
          </div>
          <button class="profile">涛</button>
        </div>

        <div class="toolbar">
          <button aria-label="Back">${arrow("#5a5a5a", false)}</button>
          <button aria-label="Forward">${arrow("#d0d0d0", true)}</button>
          <button aria-label="Reload">${reload}</button>
          <div class="omnibox">${info}<span class="url">localhost<span class="path">/tommy/Q2/</span></span>${star}</div>
          <div class="extensions">${extensions.map(([n, a]) => html`<button aria-label=${n}>${a}</button>`)}</div>
        </div>

        <nav class="bookmarks">
          ${bookmarks.map(([a, latin, cjk]) => html`<a class="bookmark" href="#">${a}${latin || cjk
            ? html`<span>${latin}${cjk ? html`<span class="cjk">${cjk}</span>` : nothing}</span>` : nothing}</a>`)}
          <span class="more">»</span>
        </nav>

        <main class="page">
          <h1>Your Favourite Seasons and Weather are:-</h1>
          <p class="lead">Please enter the city of your choice:</p>
          <div class="city"><label for="city">City:</label><input class="city-input" id="city" type="text" /></div>
          <p class="lead">Please choose the kinds of seasons and weather you like from the list below.</p>
          <p class="lead">Choose all that apply.</p>
          <h2>Weather</h2>
          ${this.choices("weather", weather, true)}
          <h2>Weather</h2>
          ${this.choices("season", seasons, false)}
          <button class="go">go</button>
        </main>

        <footer class="shelf">
          <div class="download">
            <button class="file">${icon(14, 16, svg`<path d="M1.500.5h7l4 4v11h-11z" fill="#fff" stroke="#b5b5b5"/><path d="M8.500.5v4h4" stroke="#b5b5b5"/>`)}<span>q4_db.sql</span></button>
            <button class="caret" aria-label="Options">${icon(6, 4, svg`<path d="M0 0h6L3 3.500z" fill="#111"/>`)}</button>
          </div>
          <button class="show-all">${icon(16, 16, svg`<path d="M6 2h4v4h3l-5 5-5-5h3z" fill="#555"/><path d="M1 14h14" stroke="#555" stroke-width="1.800"/>`)}<span>显示全部</span></button>
          <button class="shelf-close" aria-label="Close">${closeX}</button>
        </footer>
      </div>

      <div class="desktop">
        <div class="dock">
          ${dockApps.map((d) => html`<div class="slot" title=${d.name}>${d.art}${d.on ? html`<span class="running"></span>` : nothing}</div>`)}
          <span class="divider"></span>
          ${dockFiles.map((d) => html`<div class="slot" title=${d.name}>${d.art}</div>`)}
        </div>
      </div>
    `;
  }
}
